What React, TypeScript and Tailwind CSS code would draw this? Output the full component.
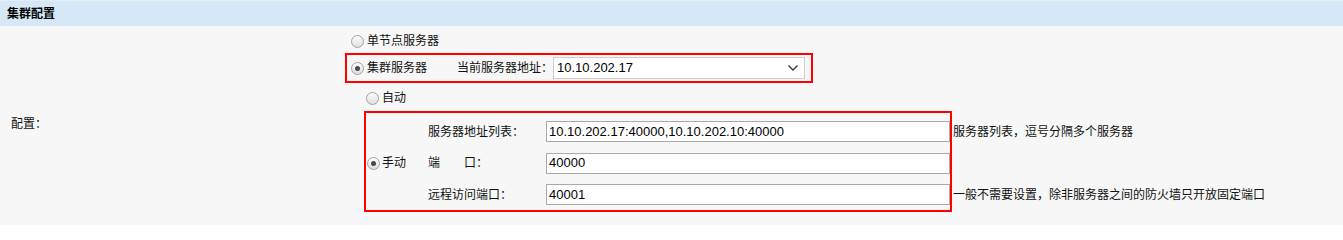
import React from "react";

// Radio bullet as drawn by the old browser theme: grey ring, soft gradient,
// dark dot when checked.
function Radio({ checked = false }: { checked?: boolean }) {
  return (
    <span className="flex size-[13px] shrink-0 items-center justify-center rounded-full border border-[#a3a3a3] bg-gradient-to-b from-[#fdfdfd] to-[#dedede]">
      {checked ? <span className="size-[5px] rounded-full bg-[#4a4a4a]" /> : null}
    </span>
  );
}

function TextInput({ value }: { value: string }) {
  return (
    <div className="flex h-[21px] w-[404px] items-center border border-[#a9a9a9] bg-white pl-[2px] text-[13px] text-black">
      {value}
    </div>
  );
}

const MANUAL_ROWS = [
  { label: "服务器地址列表：", value: "10.10.202.17:40000,10.10.202.10:40000", help: "服务器列表，逗号分隔多个服务器", h: "h-[31px]" },
  { label: "端\u3000\u3000口：", value: "40000", help: "", h: "h-[32px]" },
  { label: "远程访问端口：", value: "40001", help: "一般不需要设置，除非服务器之间的防火墙只开放固定端口", h: "h-[31px]" },
];

export default function App() {
  return (
    <div className="h-[225px] w-full overflow-hidden bg-[#f7f7f7] font-['Liberation_Sans','Noto_Sans_CJK_SC',sans-serif] text-[12px] text-[#111]">
      {/* Section header */}
      <div className="border-t border-[#e8edf2]">
        <div className="flex h-[25px] items-center bg-[#d6e7f7] pl-[7px] font-bold text-black">
          集群配置
        </div>
      </div>

      {/* Form row: label cell + options cell */}
      <div className="flex pb-[8px]">
        <div className="flex w-[345px] shrink-0 items-center pl-[11px] pt-[10px]">配置：</div>

        <div className="flex flex-col">
          {/* single node */}
          <div className="mt-[3px] flex h-[24px] items-center gap-[3px] pl-[6px]">
            <Radio />
            <span>单节点服务器</span>
          </div>

          {/* cluster (annotated) */}
          <div className="flex h-[30px] w-[468px] items-center border-2 border-[#ff0000] pl-[4px] pr-[6px]">
            <Radio checked />
            <span className="ml-[3px]">集群服务器</span>
            <span className="ml-[30px] w-[96px]">当前服务器地址：</span>
            <div className="flex h-[22px] w-[252px] items-center justify-between border border-[#cccccc] bg-white pl-[3px] pr-[6px] text-[13px] text-black">
              <span>10.10.202.17</span>
              <svg width="10" height="6" viewBox="0 0 10 6" fill="none">
                <polyline points="0.5,0.5 5,5 9.5,0.5" stroke="#333" strokeWidth="1.3" />
              </svg>
            </div>
          </div>

          {/* auto */}
          <div className="flex h-[28px] items-center gap-[3px] pl-[21px] pt-[2px]">
            <Radio />
            <span>自动</span>
          </div>

          {/* manual (annotated) + help column */}
          <div className="ml-[19px] flex">
            <div className="flex w-[588px] items-center border-2 border-[#ff0000] pl-[1px] pt-[3px]">
              <Radio checked />
              <span className="ml-[2px] w-[24px]">手动</span>
              <div className="ml-[22px] flex flex-col">
                {MANUAL_ROWS.map((row) => (
                  <div key={row.label} className={`flex items-center ${row.h}`}>
                    <span className="w-[118px] shrink-0">{row.label}</span>
                    <TextInput value={row.value} />
                  </div>
                ))}
              </div>
            </div>
            <div className="flex flex-col pl-[1px] pt-[5px]">
              {MANUAL_ROWS.map((row) => (
                <div key={row.label} className={`flex items-center whitespace-nowrap ${row.h}`}>
                  {row.help}
                </div>
              ))}
            </div>
          </div>
        </div>
      </div>
    </div>
  );
}
